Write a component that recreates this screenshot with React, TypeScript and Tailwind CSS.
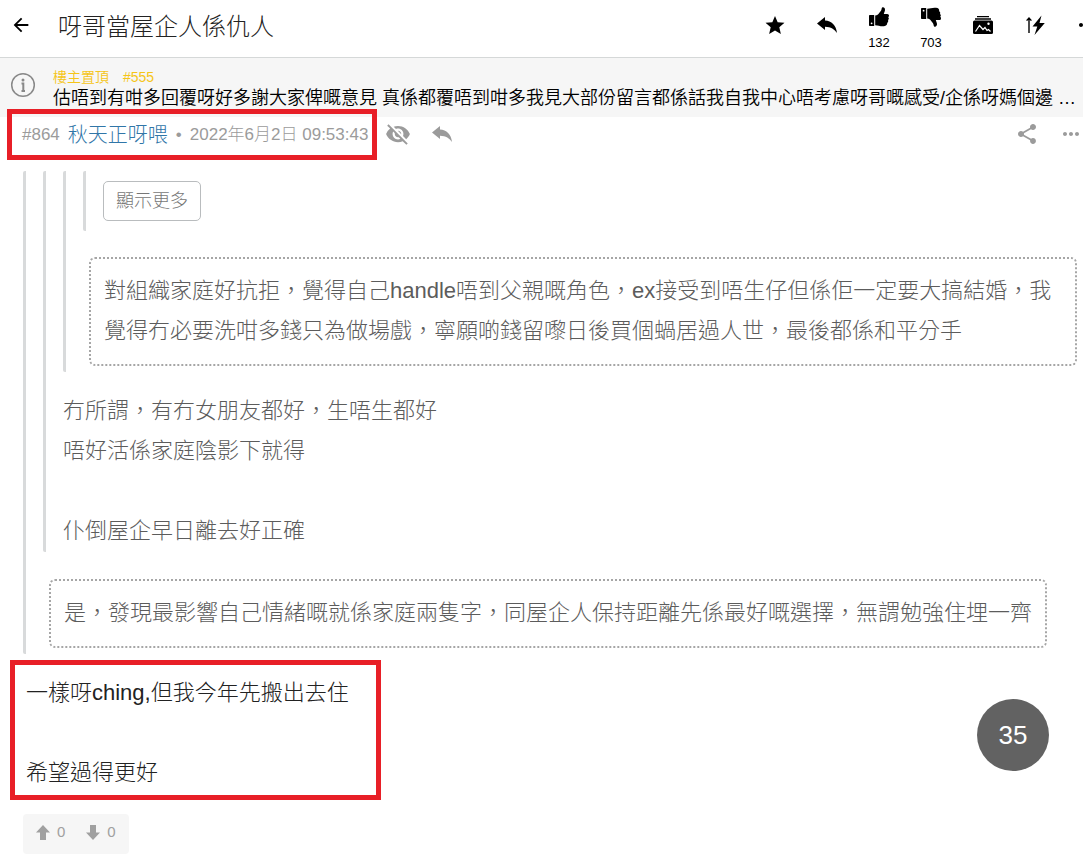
import type { ReactNode } from 'react';
import { IoMdStar } from 'react-icons/io';
import { MdArrowBack, MdMoreHoriz, MdShare, MdVisibilityOff } from 'react-icons/md';

function ReplyIcon({ className }: { className: string }) {
  return (
    <svg viewBox="0 0 20 16" fill="currentColor" className={className} aria-hidden="true">
      <path d="M0 6.5 8 0v3.400c6.500.300 11.200 4.600 12 12.600C17.500 12 14 10 8 9.700V13L0 6.500Z" />
    </svg>
  );
}

function ThumbIcon({ down = false }: { down?: boolean }) {
  return (
    <svg viewBox="0 0 20 20" fill="currentColor" className={down ? 'w-5 h-5 -scale-y-100' : 'w-5 h-5'} aria-hidden="true">
      <path d="M.8 8h4.400v11H.8a.8.8 0 0 1-.8-.8V8.800A.8.800 0 0 1 .8 8Z" />
      <circle cx="2.600" cy="16.300" r=".9" fill="#fff" />
      <path d="M6.200 8.600c2-.2 3-1.100 4-2.600.7-1.100 1.800-1.900 2.200-3.200.3-1 .2-2.300 1.300-2.500 1.400-.2 2.400 1 2.300 2.600-.1 1.500-.9 2.700-1.200 4h3.400c1.100 0 1.800.8 1.800 1.700 0 .8-.3 1.300-.8 1.600.5.400.7.900.6 1.500-.1.700-.4 1.100-.8 1.400.3.500.3 1 .1 1.600-.2.500-.5.900-.9 1.100.2 1.900-.8 3.200-3.200 3.400-3.500.4-5.500-.8-8.800-1V8.600Z" />
    </svg>
  );
}

function GalleryIcon() {
  return (
    <svg viewBox="0 0 20 18" className="w-5 h-[18px]" aria-hidden="true">
      <path d="M4 .7h12M2 3h16" stroke="currentColor" strokeWidth="1.300" fill="none" />
      <rect y="4.500" width="20" height="13.500" rx="1.500" fill="currentColor" />
      <path d="m2.500 15.500 4-6 3.500 4 2-2 2 3 1.500-1 2 2" stroke="#fff" strokeWidth="1.200" fill="none" />
      <circle cx="15.500" cy="7.800" r="1.200" fill="#fff" />
    </svg>
  );
}

function BoltIcon() {
  return (
    <svg viewBox="0 0 19 20" className="w-[19px] h-5" aria-hidden="true">
      <path d="M3 18V3.500M.6 5.600 3 3l2.400 2.600" stroke="currentColor" strokeWidth="1.400" fill="none" />
      <path d="M15.500.5 6.500 11.500h4.800L8.500 20 18.800 8h-5.300l2-7.500Z" fill="currentColor" />
    </svg>
  );
}

function InfoIcon() {
  return (
    <svg viewBox="0 0 26 26" className="w-[26px] h-[26px] shrink-0 text-[#888]" aria-hidden="true">
      <circle cx="13" cy="13" r="11.300" fill="none" stroke="currentColor" strokeWidth="1.500" />
      <circle cx="13" cy="8" r="1.500" fill="currentColor" />
      <path d="M11.500 11.500h1.800V19M11.500 19h3.500" fill="none" stroke="currentColor" strokeWidth="2" />
    </svg>
  );
}

function VoteArrow({ down = false }: { down?: boolean }) {
  return (
    <svg viewBox="0 0 14 15" fill="currentColor" className={down ? 'w-3.5 h-[15px] rotate-180' : 'w-3.5 h-[15px]'} aria-hidden="true">
      <path d="m7 0 7 7.500h-4V15H4V7.500H0L7 0Z" />
    </svg>
  );
}

function ToolButton({ label, count, children }: { label: string; count?: number; children: ReactNode }) {
  return (
    <button type="button" aria-label={label} className="w-[52px] h-full shrink-0 flex flex-col items-center justify-center">
      {children}
      {count !== undefined && <span className="text-[13px] leading-4 mt-2">{count}</span>}
    </button>
  );
}

function Quote({ children }: { children: ReactNode }) {
  return <blockquote className="border-l-[3px] border-[#d8dadb] rounded-xs pl-[17px]">{children}</blockquote>;
}

function Boxed({ children }: { children: ReactNode }) {
  return (
    <div className="w-fit ml-1.5 border-2 border-dotted border-[#a6a6a6] rounded-md px-[13px] pt-3 pb-[13px]">{children}</div>
  );
}

export default function App() {
  return (
    <div className="relative min-h-screen overflow-x-hidden bg-white font-['Liberation_Sans','Noto_Sans_CJK_TC',sans-serif] font-light text-[#222]">
      {/* Thread header */}
      <header className="h-[58px] flex items-center border-b border-[#d5d8d8] text-black overflow-hidden">
        <button type="button" aria-label="返回" className="ml-2.5 mb-2 shrink-0">
          <MdArrowBack className="w-[22px] h-[22px]" />
        </button>
        <h1 className="ml-[26px] mb-1 flex-1 text-2xl text-[#222] whitespace-nowrap">呀哥當屋企人係仇人</h1>
        <div className="flex h-full -mr-[30px]">
          <ToolButton label="收藏"><IoMdStar className="w-6 h-6 mb-2" /></ToolButton>
          <ToolButton label="回覆"><ReplyIcon className="w-5 h-4 mb-2" /></ToolButton>
          <ToolButton label="正評" count={132}><ThumbIcon /></ToolButton>
          <ToolButton label="負評" count={703}><ThumbIcon down /></ToolButton>
          <ToolButton label="圖片"><span className="mb-2"><GalleryIcon /></span></ToolButton>
          <ToolButton label="跳轉"><span className="mb-2"><BoltIcon /></span></ToolButton>
          <ToolButton label="更多"><MdMoreHoriz className="w-6 h-6 mb-2" /></ToolButton>
        </div>
      </header>

      {/* Pinned reply */}
      <section className="h-[59px] bg-[#f6f6f6] flex pl-2.5 pt-3.5">
        <InfoIcon />
        <div className="ml-[17px] -mt-1">
          <p className="flex gap-3.5 text-sm leading-[18px] text-[#f5c518] font-[350]">
            <span>樓主置頂</span>
            <span>#555</span>
          </p>
          <p className="text-lg leading-6 text-black font-[350] whitespace-nowrap">
            估唔到有咁多回覆呀好多謝大家俾嘅意見 真係都覆唔到咁多我見大部份留言都係話我自我中心唔考慮呀哥嘅感受/企係呀媽個邊 …
          </p>
        </div>
      </section>

      <article>
        <header className="h-[34px] flex items-center pl-[22px] text-[#9b9b9b] text-[17px] whitespace-nowrap">
          <div className="flex items-center pt-0.5">
            <span>#864</span>
            <a href="#user" className="ml-2 text-xl text-[#3076a8]">秋天正呀喂</a>
            <span className="mx-2">•</span>
            <time>2022年6月2日 09:53:43</time>
          </div>
          <button type="button" aria-label="隱藏" className="ml-[17px]"><MdVisibilityOff className="w-[26px] h-[26px]" /></button>
          <button type="button" aria-label="回覆" className="ml-[21px]"><ReplyIcon className="w-5 h-4" /></button>
          <button type="button" aria-label="分享" className="ml-auto"><MdShare className="w-6 h-6" /></button>
          <button type="button" aria-label="更多" className="ml-5"><MdMoreHoriz className="w-6 h-6" /></button>
        </header>

        <div className="pt-5 pl-[23px] pr-1.5 text-[22px] leading-10">
          <div className="text-[#5c5c5c]">
            <Quote>
              <Quote>
                <Quote>
                  <Quote>
                    <div className="py-2.5 flex">
                      <button type="button" className="h-10 px-3 border border-[#b9bcbe] rounded-[5px] text-lg text-[#777]">顯示更多</button>
                    </div>
                  </Quote>
                  <div className="pt-[26px] pb-1.5">
                    <Boxed>對組織家庭好抗拒，覺得自己handle唔到父親嘅角色，ex接受到唔生仔但係佢一定要大搞結婚，我覺得冇必要洗咁多錢只為做場戲，寧願啲錢留嚟日後買個蝸居過人世，最後都係和平分手</Boxed>
                  </div>
                </Quote>
                <div className="pt-[19px] pb-px">
                  <p>冇所謂，有冇女朋友都好，生唔生都好</p>
                  <p>唔好活係家庭陰影下就得</p>
                  <p className="mt-10">仆倒屋企早日離去好正確</p>
                </div>
              </Quote>
              <div className="pt-[27px] pb-1.5">
                <Boxed>是，發現最影響自己情緒嘅就係家庭兩隻字，同屋企人保持距離先係最好嘅選擇，無謂勉強住埋一齊</Boxed>
              </div>
            </Quote>
          </div>

          <div className="pt-[19px] pl-[3px]">
            <p>一樣呀ching,但我今年先搬出去住</p>
            <p className="mt-10">希望過得更好</p>
          </div>
        </div>

        {/* Votes */}
        <div className="mt-[21px] ml-[23px] w-fit h-10 px-[13px] pb-1 flex items-center gap-[21px] bg-[#f6f6f6] rounded-sm text-[15px] text-[#a0a0a0]">
          <button type="button" aria-label="正評" className="flex items-center gap-[7px]"><VoteArrow />0</button>
          <button type="button" aria-label="負評" className="flex items-center gap-[7px]"><VoteArrow down />0</button>
        </div>
      </article>

      {/* Highlight frames */}
      <div className="absolute left-[7px] top-[109px] w-[370px] h-[51px] border-[5px] border-[#e81f27] pointer-events-none" />
      <div className="absolute left-2.5 top-[660px] w-[371px] h-[140px] border-[5px] border-[#e81f27] pointer-events-none" />

      {/* Page indicator */}
      <button type="button" className="absolute right-[34px] top-[699px] w-[72px] h-[72px] rounded-full bg-[#626262] text-white text-[26px]">35</button>
    </div>
  );
}
